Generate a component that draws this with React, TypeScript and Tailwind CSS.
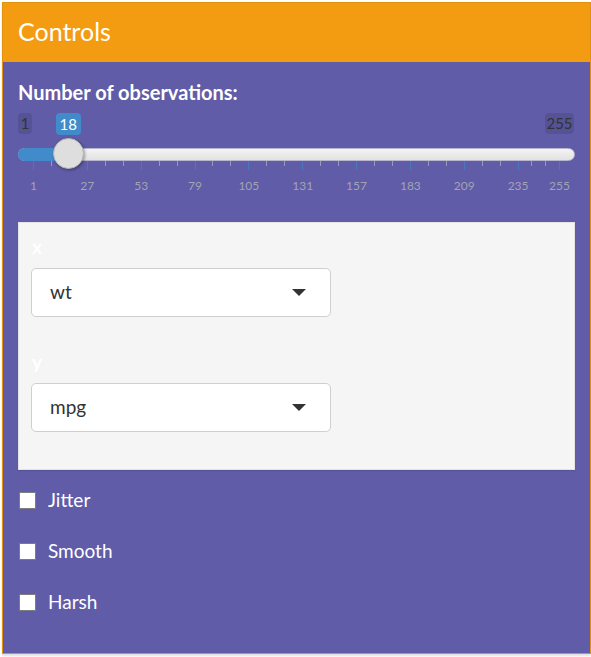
import React from "react";

const font = { fontFamily: "Lato, 'Open Sans', sans-serif" };

// slider geometry: value -> px inside the 557px track area
const MIN = 1;
const MAX = 255;
const VALUE = 18;
const px = (v: number) => 15 + ((v - MIN) * 526) / (MAX - MIN);

const majors = [1, 27, 53, 79, 105, 131, 157, 183, 209, 235, 255];

function minorTicks() {
  const out: number[] = [];
  for (let i = 0; i < majors.length - 1; i++) {
    const a = majors[i];
    const b = majors[i + 1];
    out.push(a + (b - a) / 3, a + ((b - a) * 2) / 3);
  }
  return out;
}

function Slider() {
  const hx = px(VALUE);
  return (
    <div className="relative h-[82px] w-full">
      <div className="absolute left-0 top-0 flex h-[21px] w-[14px] items-center justify-center rounded-[4px] bg-black/10 text-[15px] text-[#333]">
        1
      </div>
      <div
        className="absolute top-0 flex h-[22px] w-[25px] items-center justify-center rounded-[4px] bg-[#428bca] text-[15px] text-white"
        style={{ left: hx - 12.5 }}
      >
        18
      </div>
      <div className="absolute right-px top-0 flex h-[21px] w-[29px] items-center justify-center rounded-[4px] bg-black/10 text-[15px] text-[#333]">
        255
      </div>

      <div className="absolute left-0 right-0 top-[35px] h-[13px] rounded-full border border-[#b7b5cf] bg-gradient-to-b from-[#f4f4f4] to-[#e2e2e2]" />
      <div
        className="absolute left-0 top-[35px] h-[13px] rounded-l-full bg-[#428bca]"
        style={{ width: hx }}
      />

      {minorTicks().map((v) => (
        <div
          key={"m" + v}
          className="absolute top-[48px] h-[5px] w-px bg-[#9b9bb0]"
          style={{ left: Math.round(px(v)) }}
        />
      ))}
      {majors.map((v) => (
        <div
          key={"M" + v}
          className="absolute top-[48px] h-[9px] w-px bg-[#4a78c0]"
          style={{ left: Math.round(px(v)) }}
        />
      ))}
      {majors.map((v) => (
        <div
          key={"L" + v}
          className="absolute top-[66px] w-[40px] text-center text-[12px] leading-[14px] text-[#a3a3b3]"
          style={{ left: px(v) - 19.5 }}
        >
          {v}
        </div>
      ))}

      <div
        className="absolute top-[25px] h-[31px] w-[31px] rounded-full border border-[#b5b5b5] bg-[#dedede] shadow-[1px_1px_3px_rgba(0,0,0,0.35)]"
        style={{ left: hx - 15 }}
      />
    </div>
  );
}

function SelectBox({ value }: { value: string }) {
  return (
    <div className="flex h-[49px] w-[300px] items-center justify-between rounded-[5px] border border-[#cfcfcf] bg-white pl-[18px] pr-[24px] text-[19px] text-[#333]">
      <span className="pb-[1px]">{value}</span>
      <span className="h-0 w-0 border-x-[7px] border-t-[7px] border-x-transparent border-t-[#333]" />
    </div>
  );
}

function Check({ label }: { label: string }) {
  return (
    <label className="flex h-[17px] items-center gap-[12px]">
      <span className="h-[17px] w-[17px] border border-[#7d7d7d] bg-white" />
      <span className="text-[19px] text-white">{label}</span>
    </label>
  );
}

export default function App() {
  return (
    <div className="h-[657px] w-[591px] bg-white pl-[2px] pt-[2px]" style={font}>
      <div className="flex h-[652px] w-[589px] flex-col border border-[#e39210] bg-[#605ca8] shadow-[0_2px_2px_rgba(0,0,0,0.12)]">
        <div className="flex h-[59px] items-center bg-[#f39c12] pb-[1px] pl-[15px] text-[25px] text-white">
          Controls
        </div>
        <div className="flex flex-1 flex-col px-[15px]">
          <div className="mt-[18px] text-[20px] font-bold leading-[24px] text-white">
            Number of observations:
          </div>
          <div className="mt-[9px]">
            <Slider />
          </div>

          <div className="mt-[27px] h-[248px] border border-[#e3e3e3] bg-[#f5f5f5] px-[12px] pt-[12px] shadow-[0_1px_1px_rgba(0,0,0,0.08)]">
            <div className="pl-[1px] text-[19px] font-bold leading-[24px] text-white">x</div>
            <div className="mt-[9px]">
              <SelectBox value="wt" />
            </div>
            <div className="mt-[33px] pl-[1px] text-[19px] font-bold leading-[24px] text-white">y</div>
            <div className="mt-[9px]">
              <SelectBox value="mpg" />
            </div>
          </div>

          <div className="mt-[22px] flex flex-col gap-[34px] pl-px">
            <Check label="Jitter" />
            <Check label="Smooth" />
            <Check label="Harsh" />
          </div>
        </div>
      </div>
    </div>
  );
}
